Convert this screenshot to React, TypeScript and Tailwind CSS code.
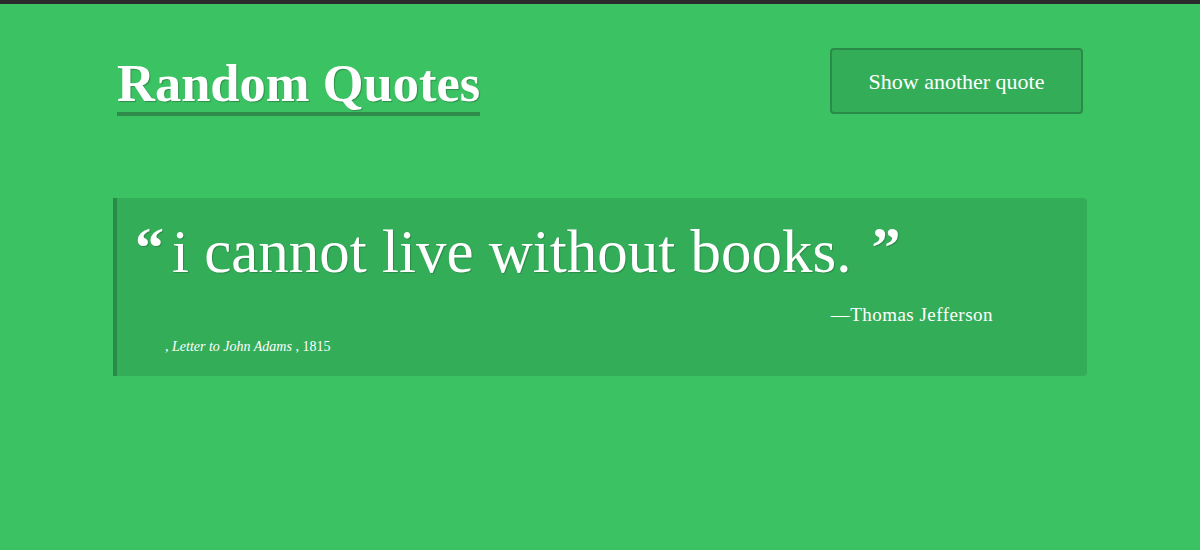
const serif = { fontFamily: '"Liberation Serif", "DejaVu Serif", serif' };

export default function App() {
  return (
    <div
      className="min-h-[550px] border-t-4 border-[#2b2b2b] bg-[#3bc262] text-white"
      style={serif}
    >
      <div className="mx-auto w-[974px] pt-[44px]">
        <header className="flex items-start justify-between">
          <h1 className="ml-1 mt-[6px] border-b-4 border-[#2e8b4a] text-[52.5px] font-bold leading-[58px] [text-shadow:1px_1px_1px_rgba(0,0,0,0.25)]">
            Random Quotes
          </h1>
          <button className="mr-1 h-[66px] w-[253px] rounded border-2 border-[#2a8a48] bg-[#34ad59] text-[22px] text-white">
            Show another quote
          </button>
        </header>

        <blockquote className="mt-[82px] rounded-r border-l-4 border-[#2a8a48] bg-[#34ad59] pt-[18px] pb-[19px] pl-[18px] pr-6">
          <p className="flex items-start text-[61px] leading-[72px] [text-shadow:1px_1px_1px_rgba(0,0,0,0.2)]">
            <span className="mr-2 mt-[4px] text-[58px] font-bold leading-[56px]">“</span>
            <span>i cannot live without books.</span>
            <span className="ml-5 mt-[4px] text-[58px] font-bold leading-[56px]">”</span>
          </p>
          <p className="mt-[13px] pr-[70px] text-right text-[19px] tracking-wide">
            —Thomas Jefferson
          </p>
          <p className="mt-[6px] pl-[30px] text-[14px]">
            , <em>Letter to John Adams</em> , 1815
          </p>
        </blockquote>
      </div>
    </div>
  );
}
